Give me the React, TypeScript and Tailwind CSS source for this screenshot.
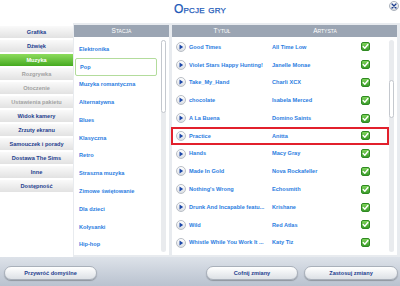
const sideItems = [
  { label: 'Grafika' },
  { label: 'Dźwięk' },
  { label: 'Muzyka', active: true },
  { label: 'Rozgrywka', disabled: true },
  { label: 'Otoczenie', disabled: true },
  { label: 'Ustawienia pakietu', disabled: true },
  { label: 'Widok kamery' },
  { label: 'Zrzuty ekranu' },
  { label: 'Samouczek i porady' },
  { label: 'Dostawa The Sims' },
  { label: 'Inne' },
  { label: 'Dostępność' },
];

const stations = [
  'Elektronika',
  'Pop',
  'Muzyka romantyczna',
  'Alternatywna',
  'Blues',
  'Klasyczna',
  'Retro',
  'Straszna muzyka',
  'Zimowe świętowanie',
  'Dla dzieci',
  'Kołysanki',
  'Hip-hop',
];

// titles are cut the same way the game list shows them
const songs = [
  ['Good Times', 'All Time Low'],
  ['Violet Stars Happy Hunting!', 'Janelle Monae'],
  ['Take_My_Hand', 'Charli XCX'],
  ['chocolate', 'Isabela Merced'],
  ['A La Buena', 'Domino Saints'],
  ['Practice', 'Anitta'],
  ['Hands', 'Macy Gray'],
  ['Made In Gold', 'Nova Rockafeller'],
  ["Nothing's Wrong", 'Echosmith'],
  ['Drunk And Incapable featu...', 'Krishane'],
  ['Wild', 'Red Atlas'],
  ['Whistle While You Work It ...', 'Katy Tiz'],
];

function PlayIcon() {
  return (
    <span className="flex h-[10px] w-[10px] shrink-0 items-center justify-center rounded-full border border-[#b9bec6] bg-gradient-to-b from-white to-[#dcdfe4]">
      <svg width="6" height="6" viewBox="0 0 6 6">
        <path d="M1.5 0.6 L5.2 3 L1.5 5.4 Z" fill="#1b47a8" />
      </svg>
    </span>
  );
}

function CheckIcon() {
  return (
    <span className="flex h-[9px] w-[9px] shrink-0 items-center justify-center rounded-[2px] border border-[#2f8a22] bg-gradient-to-b from-[#7ed35a] to-[#3b9c2b]">
      <svg width="7" height="7" viewBox="0 0 7 7">
        <path d="M1.2 3.6 L2.8 5.2 L5.9 1.5" fill="none" stroke="white" strokeWidth="1.4" strokeLinecap="round" strokeLinejoin="round" />
      </svg>
    </span>
  );
}

function Scrollbar({ thumbTop, thumbHeight }: { thumbTop: number; thumbHeight: number }) {
  return (
    <div className="absolute bottom-[3px] right-[3px] top-[3px] w-[5px] rounded-full bg-[#e9ebee]">
      <div
        className="absolute left-0 w-[5px] rounded-full border border-[#c4c8ce] bg-white"
        style={{ top: thumbTop, height: thumbHeight }}
      />
    </div>
  );
}

function FooterButton({ label, className }: { label: string; className: string }) {
  return (
    <button
      className={`flex h-[14px] items-center justify-center rounded-full border border-[#a9b0ba] bg-gradient-to-b from-white to-[#dde1e6] text-[5.6px] font-bold text-[#1d3e8e] shadow-[0_1px_1px_rgba(0,0,0,0.25)] ${className}`}
    >
      {label}
    </button>
  );
}

export default function App() {
  return (
    <div className="flex h-[286px] w-[400px] flex-col overflow-hidden bg-white font-['Liberation_Sans',Arial,sans-serif]">
      {/* Header */}
      <div className="relative flex h-[23px] items-start justify-center pt-[2px]">
        <span className="text-[12px] leading-[14px] tracking-[0.2px] text-[#2058b8] [font-variant-caps:small-caps] [-webkit-text-stroke:0.25px_#2058b8]">
          Opcje gry
        </span>
        <button className="absolute right-[1px] top-[1px] flex h-[10px] w-[10px] items-center justify-center rounded-full border border-[#aab1bb] bg-gradient-to-b from-white to-[#d6dae0]">
          <svg width="6" height="6" viewBox="0 0 6 6">
            <path d="M1 1 L5 5 M5 1 L1 5" stroke="#1d3e8e" strokeWidth="1.3" strokeLinecap="round" />
          </svg>
        </button>
      </div>

      {/* Middle */}
      <div className="flex h-[234px]">
        {/* Sidebar */}
        <div className="flex w-[73px] flex-col gap-[2px] pt-[3px]">
          {sideItems.map((item) => (
            <div
              key={item.label}
              className={`flex h-[12px] items-center justify-center text-[5.6px] font-bold ${
                item.active
                  ? 'bg-gradient-to-b from-[#8ddc5c] to-[#44aa1e] text-white'
                  : item.disabled
                    ? 'bg-gradient-to-b from-[#fafafa] to-[#e2e2e2] text-[#a2a2a2]'
                    : 'bg-gradient-to-b from-[#fafafa] to-[#e2e2e2] text-[#1d3e8e]'
              }`}
            >
              {item.label}
            </div>
          ))}
        </div>

        {/* Panels */}
        <div className="flex flex-1 gap-[3px] bg-[#e8ebef] py-[2px] pl-[1px] pr-[3px]">
          {/* Stacja */}
          <div className="flex w-[95px] flex-col">
            <div className="flex h-[12px] items-center justify-center bg-[#9ba5b3] text-[6.5px] text-white [font-variant-caps:small-caps]">
              Stacja
            </div>
            <div className="relative flex-1 bg-white pt-[3px]">
              {stations.map((s) => (
                <div
                  key={s}
                  className={`ml-[1px] flex h-[17.8px] w-[82px] items-center pl-[4px] text-[5.6px] font-bold text-[#2b7ddf] ${
                    s === 'Pop' ? 'rounded-[2px] border border-[#b3dc9c]' : ''
                  }`}
                >
                  {s}
                </div>
              ))}
              <Scrollbar thumbTop={0} thumbHeight={73} />
            </div>
          </div>

          {/* Utwory */}
          <div className="flex flex-1 flex-col">
            <div className="flex h-[12px] items-center bg-[#9ba5b3] text-[6.5px] text-white [font-variant-caps:small-caps]">
              <span className="w-[100px] text-center">Tytuł</span>
              <span className="w-[106px] text-center">Artysta</span>
            </div>
            <div className="relative flex-1 bg-white pt-[1px]">
              {songs.map(([title, artist]) => (
                <div
                  key={title}
                  className={`flex h-[17.8px] w-[218px] items-center text-[5.6px] font-bold text-[#2b7ddf] ${
                    title === 'Practice'
                      ? '-ml-[1px] border-2 border-[#e2202c] pl-[3px]'
                      : 'pl-[4px]'
                  }`}
                >
                  <PlayIcon />
                  <span className="ml-[3px] w-[83px] shrink-0 whitespace-nowrap">{title}</span>
                  <span className="w-[89px] shrink-0">{artist}</span>
                  <CheckIcon />
                </div>
              ))}
              <Scrollbar thumbTop={40} thumbHeight={38} />
            </div>
          </div>
        </div>
      </div>

      {/* Footer */}
      <div className="flex flex-1 items-center bg-gradient-to-b from-[#dde2e9] to-[#b9c2cf] pl-[4px] pr-[2px] pt-[3px]">
        <FooterButton label="Przywróć domyślne" className="w-[93px]" />
        <div className="flex-1" />
        <FooterButton label="Cofnij zmiany" className="w-[92px]" />
        <FooterButton label="Zastosuj zmiany" className="ml-[6px] w-[94px]" />
      </div>
    </div>
  );
}
